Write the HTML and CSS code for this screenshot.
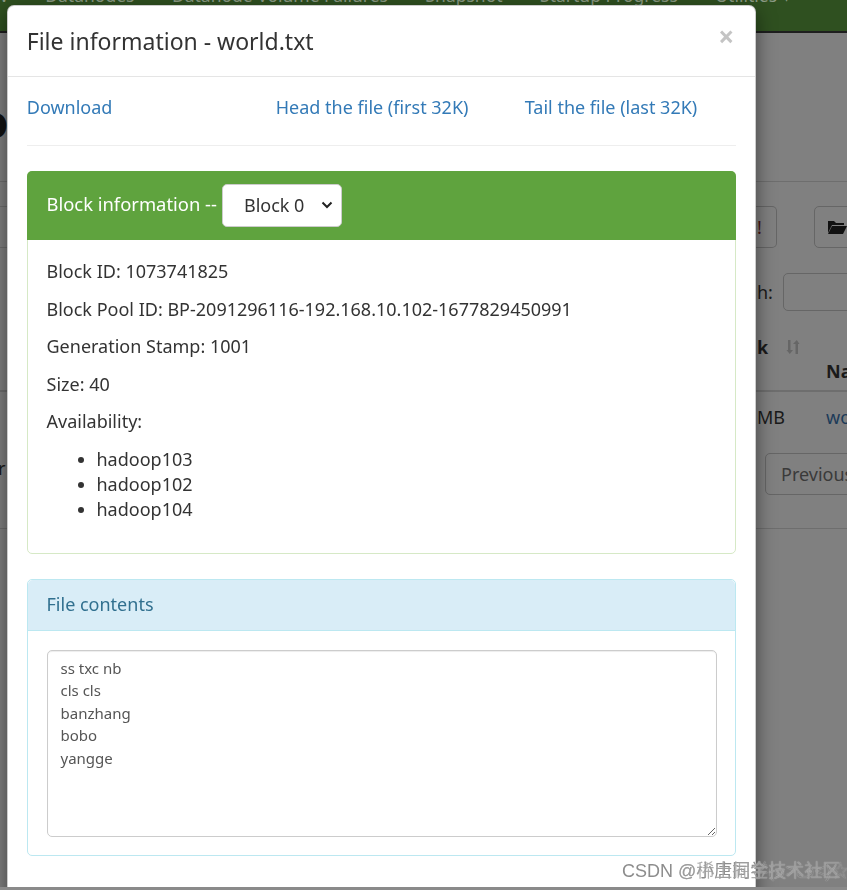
FILE: index.html
```html
<!DOCTYPE html>
<html>
<head>
<meta charset="utf-8">
<title>File information - world.txt</title>
<link rel="stylesheet" href="styles.css">
</head>
<body>
<div class="page">
  <div class="nav">
    <div class="nav-items">
      <span>w</span><span>Datanodes</span><span>Datanode Volume Failures</span><span>Snapshot</span><span>Startup Progress</span><span>Utilities ▾</span>
    </div>
  </div>
  <div class="row hero">
    <div class="cell-l"><span class="big-o">o</span></div><div></div><div></div>
  </div>
  <div class="row toolbar">
    <div class="cell-l"><div class="lbox"></div></div><div></div>
    <div class="cell-r tools">
      <div class="btn btn-bang">!</div>
      <div class="btn btn-folder">
        <svg width="20" height="16" viewBox="0 0 20 16"><path d="M1 2h6l2 2h8v2H5L1 14z" fill="#111"/><path d="M5 7h15l-4 8H1z" fill="#111"/></svg>
      </div>
    </div>
  </div>
  <div class="row search">
    <div></div><div></div>
    <div class="cell-r search-r"><span>h:</span><div class="sinput"></div></div>
  </div>
  <div class="row thead">
    <div></div><div></div>
    <div class="cell-r thead-r">
      <div class="th-a"><b>k</b>
        <svg class="sort" width="14" height="16" viewBox="0 0 14 16"><path d="M2 1h2.5v10H7l-3.25 4L.5 11H2z" fill="#666"/><path d="M9.5 15h2.5V5h1.5L10.75 1 7 5h2.5z" fill="#666"/></svg>
      </div>
      <div class="th-b"><b>Na</b></div>
    </div>
  </div>
  <div class="row trow">
    <div></div><div></div>
    <div class="cell-r trow-r"><span class="td-a">MB</span><span class="td-b">wo</span></div>
  </div>
  <div class="row pager">
    <div class="cell-l"><span class="pr">r</span></div><div></div>
    <div class="cell-r"><div class="btn btn-prev">Previous</div></div>
  </div>
</div>

<div class="modal">
  <div class="modal-header">
    <h4 class="modal-title">File information - world.txt</h4>
    <span class="close">×</span>
  </div>
  <div class="modal-body">
    <div class="links">
      <a href="#">Download</a>
      <a href="#">Head the file (first 32K)</a>
      <a href="#">Tail the file (last 32K)</a>
    </div>
    <hr>
    <div class="panel panel-success">
      <div class="panel-heading">
        <span class="ph-title">Block information --</span>
        <div class="select"><span>Block 0</span>
          <svg width="12" height="8" viewBox="0 0 12 8"><path d="M1.5 1.5l4.5 4.5 4.5-4.5" fill="none" stroke="#222" stroke-width="2"/></svg>
        </div>
      </div>
      <div class="panel-body">
        <p>Block ID: 1073741825</p>
        <p>Block Pool ID: BP-2091296116-192.168.10.102-1677829450991</p>
        <p>Generation Stamp: 1001</p>
        <p>Size: 40</p>
        <p>Availability:</p>
        <ul>
          <li>hadoop103</li>
          <li>hadoop102</li>
          <li>hadoop104</li>
        </ul>
      </div>
    </div>
    <div class="panel panel-info">
      <div class="panel-heading info-heading">File contents</div>
      <div class="panel-body">
        <textarea class="contents" readonly>ss txc nb
cls cls
banzhang
bobo
yangge</textarea>
      </div>
    </div>
  </div>
</div>

<div class="watermark">
  <span class="wm1">CSDN @小唐同学(๑&gt;ڡ&lt;)☆</span>
  <span class="wm2">@稀土掘金技术社区</span>
</div>
<div class="bottom-edge"></div>
</body>
</html>
```

FILE: styles.css
```css
html, body {
  margin: 0;
  padding: 0;
}
body {
  font-family: "Noto Sans", "Noto Sans CJK SC", sans-serif;
  font-size: 18px;
  line-height: 25px;
  color: #333;
  background: #808080;
  overflow: hidden;
  height: 890px;
}

/* dimmed background page */
.page {
  width: 1000px;
  color: #1a1a1a;
}
.nav {
  height: 31px;
  background: #2f5020;
  border-bottom: 2px solid #1e1e1e;
  overflow: hidden;
}
.nav-items {
  display: flex;
  gap: 37.5px;
  margin: -17px 0 0 -6px;
  color: #8b9a84;
  white-space: nowrap;
  font-size: 17.5px;
}
.row {
  display: grid;
  grid-template-columns: 8px 749px 1fr;
}
.cell-l {
  overflow: hidden;
  position: relative;
}
.hero {
  height: 148px;
  border-bottom: 1px solid #6e6e6e;
}
.big-o {
  display: block;
  margin: 66px 0 0 -19px;
  font-size: 44px;
  line-height: 44px;
  font-weight: 700;
  color: #121212;
}
.toolbar {
  margin-top: 24px;
  height: 42px;
}
.lbox {
  height: 40px;
  border-top: 1px solid #6e6e6e;
  border-bottom: 1px solid #6e6e6e;
}
.tools {
  display: flex;
}
.btn {
  box-sizing: border-box;
  height: 42px;
  border: 1px solid #666;
  border-radius: 5px;
  display: flex;
  align-items: center;
}
.btn-bang {
  width: 21px;
  margin-left: -1px;
  border-left: 0;
  border-radius: 0 5px 5px 0;
  color: #4a1616;
  padding-left: 1px;
}
.btn-folder {
  margin-left: 37px;
  width: 70px;
  padding-left: 12px;
}
.search {
  margin-top: 25px;
  height: 38px;
}
.search-r {
  display: flex;
  align-items: center;
}
.sinput {
  margin-left: 10px;
  width: 120px;
  height: 38px;
  box-sizing: border-box;
  border: 1px solid #666;
  border-radius: 5px;
}
.thead {
  height: 79px;
  border-bottom: 2px solid #6e6e6e;
}
.thead-r {
  display: flex;
}
.th-a {
  width: 69px;
  padding-top: 24px;
  display: flex;
  align-items: flex-start;
  gap: 18px;
}
.th-a b { line-height: 25px; }
.sort { margin-top: 4px; }
.th-b {
  align-self: flex-end;
  padding-bottom: 6px;
}
.trow {
  height: 53px;
}
.trow-r {
  display: flex;
  padding-top: 13px;
}
.td-a { width: 69px; }
.td-b { color: #1c3b59; }
.pager {
  padding-top: 8px;
  padding-bottom: 33px;
  border-bottom: 1px solid #6e6e6e;
}
.pr {
  display: block;
  margin: 3px 0 0 -2px;
}
.btn-prev {
  margin-left: 8px;
  width: 110px;
  padding-left: 15px;
  color: #3a3a3a;
}

/* modal */
.modal {
  position: fixed;
  top: 5px;
  left: 7px;
  width: 749px;
  box-sizing: border-box;
  background: #fff;
  border: 1px solid rgba(0, 0, 0, 0.2);
  border-radius: 7px;
  box-shadow: 0 6px 19px rgba(0, 0, 0, 0.5);
}
.modal-header {
  padding: 18.75px;
  border-bottom: 1px solid #e5e5e5;
  display: flex;
  justify-content: space-between;
  align-items: center;
}
.modal-title {
  margin: 0;
  font-size: 23px;
  line-height: 32px;
  font-weight: 400;
  color: #333;
}
.close {
  font-size: 28px;
  line-height: 28px;
  font-weight: 700;
  color: #c4c4c4;
  margin-right: 2px;
  margin-top: -10px;
}
.modal-body {
  padding: 18.75px 18.75px 40px;
}
.links {
  display: grid;
  grid-template-columns: 249px 249px 1fr;
}
.links a {
  color: #337ab7;
  text-decoration: none;
}
hr {
  margin: 25px 0;
  border: 0;
  border-top: 1px solid #eee;
}
.panel {
  border: 1px solid;
  border-radius: 5px;
  margin-bottom: 25px;
}
.panel-success {
  border-color: #d6e9c6;
}
.panel-success .panel-heading {
  background: #5fa33e;
  color: #fff;
  margin: -1px -1px 0;
  border-radius: 5px 5px 0 0;
  padding: 12.5px 19.75px 13.5px;
  display: flex;
  align-items: center;
  gap: 5px;
}
.ph-title {
  font-size: 18.4px;
  margin-top: -3px;
}
.select {
  width: 120px;
  height: 43px;
  box-sizing: border-box;
  background: #fff;
  border: 1px solid #ccc;
  border-radius: 5px;
  display: flex;
  align-items: center;
  justify-content: space-between;
  padding: 0 8px 0 21px;
  color: #333;
  font-size: 18px;
}
.panel-body {
  padding: 18.75px;
}
.panel-body p {
  margin: 0 0 12.5px;
}
.panel-body ul {
  margin: 0 0 12.5px;
  padding-left: 50px;
}
.panel-info {
  border-color: #bce8f1;
}
.info-heading {
  background: #d9edf7;
  color: #31708f;
  padding: 12.5px 18.75px;
  border-bottom: 1px solid #bce8f1;
  border-radius: 5px 5px 0 0;
}
.contents {
  display: block;
  width: 100%;
  height: 187px;
  box-sizing: border-box;
  margin: 0;
  border: 1px solid #ccc;
  border-radius: 5px;
  padding: 6px 13px 5px;
  font-family: "Noto Sans", sans-serif;
  font-size: 15px;
  line-height: 22.5px;
  color: #555;
  background: #fff;
  resize: vertical;
  box-shadow: inset 0 1px 1px rgba(0, 0, 0, 0.075);
  outline: none;
}

/* overlays */
.watermark {
  position: fixed;
  left: 622px;
  top: 858px;
  width: 225px;
  height: 26px;
  overflow: hidden;
  font-family: "Liberation Sans", "Noto Sans CJK SC", sans-serif;
  font-size: 18px;
  line-height: 26px;
  white-space: nowrap;
  color: rgba(120, 120, 120, 0.85);
  text-shadow: 0 0 1px rgba(255, 255, 255, 0.6);
}
.wm1, .wm2 {
  position: absolute;
  top: 0;
}
.wm1 { left: 0; }
.wm2 { left: 56px; color: rgba(140, 140, 140, 0.7); }
.bottom-edge {
  position: fixed;
  left: 0;
  right: 0;
  bottom: 0;
  height: 3px;
  background: #8a8a8a;
}
```
